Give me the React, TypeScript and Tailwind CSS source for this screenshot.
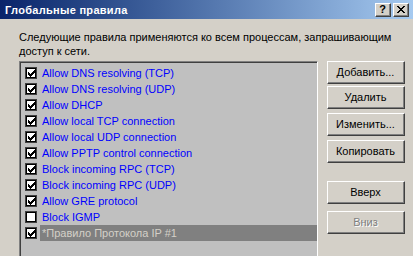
import React from "react";

const rules = [
  { label: "Allow DNS resolving (TCP)", checked: true },
  { label: "Allow DNS resolving (UDP)", checked: true },
  { label: "Allow DHCP", checked: true },
  { label: "Allow local TCP connection", checked: true },
  { label: "Allow local UDP connection", checked: true },
  { label: "Allow PPTP control connection", checked: true },
  { label: "Block incoming RPC (TCP)", checked: true },
  { label: "Block incoming RPC (UDP)", checked: true },
  { label: "Allow GRE protocol", checked: true },
  { label: "Block IGMP", checked: false },
  { label: "*Правило Протокола IP #1", checked: true, selected: true },
];

const buttons = [
  { label: "Добавить...", top: "mt-0" },
  { label: "Удалить", top: "mt-[2px]" },
  { label: "Изменить...", top: "mt-[4px]" },
  { label: "Копировать", top: "mt-[4px]" },
  { label: "Вверх", top: "mt-[18px]" },
  { label: "Вниз", top: "mt-[7px]", disabled: true },
];

const Check = () => (
  <svg width="7" height="7" viewBox="0 0 7 7" shapeRendering="crispEdges">
    <path
      d="M6 0h1v3h-1zM5 1h1v3h-1zM4 2h1v3h-1zM3 3h1v3h-1zM2 4h1v3h-1zM1 3h1v3h-1zM0 2h1v3h-1z"
      fill="#000"
    />
  </svg>
);

const Checkbox = ({ checked }: { checked: boolean }) => (
  <div className="h-[12px] w-[12px] shrink-0 border border-[#404040] bg-white">
    <div className="flex h-full w-full items-center justify-center border border-black">
      {checked && <Check />}
    </div>
  </div>
);

const ClassicButton = ({ label, disabled }: { label: string; disabled?: boolean }) => (
  <div className="h-[23px] w-[78px] border-t border-l border-white border-r border-b border-r-[#404040] border-b-[#404040] bg-[#d4d0c8]">
    <div className="flex h-full w-full items-center justify-center border-r border-b border-[#808080]">
      {disabled ? (
        <span className="text-[#808080] [text-shadow:1px_1px_0_#fff]">{label}</span>
      ) : (
        <span className="text-black">{label}</span>
      )}
    </div>
  </div>
);

const CaptionButton = ({ children }: { children: React.ReactNode }) => (
  <div className="h-[14px] w-[16px] border-t border-l border-white border-r border-b border-r-[#404040] border-b-[#404040] bg-[#d4d0c8]">
    <div className="flex h-full w-full items-center justify-center border-r border-b border-[#808080]">
      {children}
    </div>
  </div>
);

export default function App() {
  return (
    <div
      className="flex h-[256px] w-[413px] flex-col overflow-hidden bg-[#d4d0c8] text-[11px] leading-[14px] text-black"
      style={{ fontFamily: '"Liberation Sans", Arial, sans-serif' }}
    >
      <div className="flex h-[19px] shrink-0 items-center justify-between bg-gradient-to-r from-[#0a246a] to-[#a6caf0] pl-[5px] pr-[4px]">
        <span className="text-[11px] font-bold tracking-[0.3px] text-white">Глобальные правила</span>
        <div className="flex gap-[2px]">
          <CaptionButton>
            <span className="text-[11px] font-bold leading-none">?</span>
          </CaptionButton>
          <CaptionButton>
            <svg width="8" height="7" viewBox="0 0 8 7" shapeRendering="crispEdges">
              <path
                d="M0 0h2v1h-2zM6 0h2v1h-2zM1 1h2v1h-2zM5 1h2v1h-2zM2 2h4v1h-4zM3 3h2v1h-2zM2 4h4v1h-4zM1 5h2v1h-2zM5 5h2v1h-2zM0 6h2v1h-2zM6 6h2v1h-2z"
                fill="#000"
              />
            </svg>
          </CaptionButton>
        </div>
      </div>

      <div className="flex flex-col pl-[19px] pt-[11px]">
        <p className="w-[380px]">
          Следующие правила применяются ко всем процессам, запрашивающим доступ к сети.
        </p>

        <div className="mt-[3px] flex gap-[9px]">
          <div className="h-[220px] w-[299px] border-t border-l border-[#808080] border-r border-b border-r-white border-b-white">
            <div className="h-full border-t border-l border-[#404040] bg-[#c0c0c0] pt-[2px]">
              {rules.map((r) => (
                <div key={r.label} className="flex h-[16px] items-center">
                  <div className="ml-[4px] mr-[3px]">
                    <Checkbox checked={r.checked} />
                  </div>
                  <div
                    className={
                      r.selected
                        ? "flex h-full flex-1 items-center bg-[#808080] pl-[2px] text-[#d4d0c8]"
                        : "flex h-full flex-1 items-center pl-[2px] text-[#0000ff]"
                    }
                  >
                    {r.label}
                  </div>
                </div>
              ))}
            </div>
          </div>

          <div className="flex flex-col">
            {buttons.map((b) => (
              <div key={b.label} className={b.top}>
                <ClassicButton label={b.label} disabled={b.disabled} />
              </div>
            ))}
          </div>
        </div>
      </div>
    </div>
  );
}
